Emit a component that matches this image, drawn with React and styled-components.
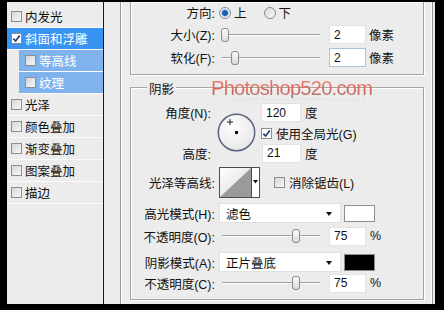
import styled, { createGlobalStyle } from "styled-components"

const GlobalStyle = createGlobalStyle`
  body {
    margin: 0;
    background: #000;
  }
`

const Window = styled.div`
  position: relative;
  width: 444px;
  height: 310px;
  box-sizing: border-box;
  padding: 2px 9px 6px 7px;
  background: #000;
  display: flex;
  font-family: "Liberation Sans", "Noto Sans CJK SC", sans-serif;
  font-size: 12.5px;
  color: #111;
  overflow: hidden;
`

const StyleList = styled.ul`
  list-style: none;
  margin: 0;
  padding: 4px 0 0;
  width: 96px;
  background: #ececec;
  border-right: 1px solid #1a1a1a;
`

const StyleItem = styled.li`
  display: flex;
  align-items: center;
  gap: 3px;
  height: 22px;
  box-sizing: border-box;
  border-bottom: 1px solid #fbfbfb;
  padding-left: ${(p) => (p.$sub ? 6 : 4)}px;
  margin-left: ${(p) => (p.$sub ? 12 : 0)}px;
  background: ${(p) => (p.$active ? "#3993f3" : p.$sub ? "#80b3ec" : "transparent")};
  color: ${(p) => (p.$active || p.$sub ? "#fff" : "#111")};
  white-space: nowrap;
`

const Box = styled.span`
  display: inline-flex;
  align-items: center;
  justify-content: center;
  flex: none;
  width: 11px;
  height: 11px;
  box-sizing: border-box;
  border: 1px solid #8c8d8d;
  background: ${(p) => (p.$checked ? "#fff" : "linear-gradient(135deg, #d6d6d6, #f8f8f8)")};
`

const Options = styled.div`
  flex: 1;
  background: #ececec;
  padding: 0 2px 0 16px;
  display: flex;
`

const Frame = styled.div`
  flex: 1;
  border-left: 1px solid #9a9a9a;
  border-right: 1px solid #9a9a9a;
  box-shadow: inset 1px 0 0 #fff, inset -1px 0 0 #fff;
  padding: 0 8px 0 9px;
  display: flex;
  flex-direction: column;
`

const Group = styled.div`
  position: relative;
  border: 1px solid #a4a4a4;
  border-top: ${(p) => (p.$cut ? "none" : "1px solid #a4a4a4")};
  box-shadow: inset 1px 1px 0 #fff, 1px 1px 0 #fff;
  margin-top: ${(p) => p.$mt || 0}px;
  padding: ${(p) => p.$pt || 0}px 0 ${(p) => p.$pb || 0}px;
`

const Legend = styled.span`
  position: absolute;
  top: -9px;
  left: 16px;
  padding: 0 2px;
  background: #ececec;
`

const Row = styled.div`
  display: grid;
  grid-template-columns: 84px auto;
  column-gap: 4px;
  align-items: center;
  height: ${(p) => p.$h || 23}px;
  margin-top: ${(p) => p.$mt || 0}px;
`

const Label = styled.span`
  text-align: right;
  white-space: nowrap;
`

const Controls = styled.div`
  display: flex;
  align-items: center;
  white-space: nowrap;
`

const Radio = styled.span`
  width: 12px;
  height: 12px;
  box-sizing: border-box;
  border-radius: 50%;
  border: 1px solid #8a8a8a;
  margin-right: 3px;
  margin-left: ${(p) => p.$ml || 0}px;
  background: ${(p) =>
    p.$on
      ? "radial-gradient(circle, #1b5da8 0 2.5px, #6aa0d6 3px, #e8eef6 4px)"
      : "linear-gradient(135deg, #d8d8d8, #fafafa)"};
`

const Slider = styled.div`
  position: relative;
  width: 103px;
  height: 16px;
  margin-right: 7px;
  &::before {
    content: "";
    position: absolute;
    left: 3px;
    right: 2px;
    top: 7px;
    height: 1px;
    background: #a0a0a0;
    box-shadow: 0 1px 0 #fff;
  }
`

const Thumb = styled.span`
  position: absolute;
  top: 1px;
  left: ${(p) => p.$pos}px;
  width: 8px;
  height: 14px;
  box-sizing: border-box;
  border: 1px solid #8b8b8b;
  border-radius: 3px;
  background: linear-gradient(#fdfdfd, #d9d9d9);
`

const NumBox = styled.span`
  display: inline-flex;
  align-items: center;
  width: ${(p) => p.$w || 37}px;
  height: 19px;
  box-sizing: border-box;
  padding-left: 4px;
  margin-left: ${(p) => p.$ml || 0}px;
  background: #fff;
  border: 1px solid ${(p) => (p.$focus ? "#a9c2dc" : "#e2e2e2")};
  font-size: 12px;
`

const Unit = styled.span`
  margin-left: ${(p) => p.$ml || 3}px;
`

const AngleBlock = styled.div`
  display: grid;
  grid-template-columns: 80px 50px auto;
  grid-template-rows: 21px 20px 20px;
  align-items: center;
`

const Dial = styled.svg`
  grid-column: 2;
  grid-row: 1 / 4;
  justify-self: center;
`

const Cell = styled.div`
  display: flex;
  align-items: center;
  white-space: nowrap;
  grid-column: ${(p) => p.$col};
  grid-row: ${(p) => p.$row};
  justify-content: ${(p) => (p.$right ? "flex-end" : "flex-start")};
`

const ContourPicker = styled.div`
  display: flex;
  width: 41px;
  height: 31px;
  box-sizing: border-box;
  border: 1px solid #4d4d4d;
  background: #fff;
  margin-right: 14px;
`

const ContourArrow = styled.div`
  flex: 1;
  display: flex;
  align-items: center;
  justify-content: center;
  border-left: 1px solid #4d4d4d;
`

const Select = styled.div`
  position: relative;
  width: 122px;
  height: 20px;
  box-sizing: border-box;
  display: flex;
  align-items: center;
  padding-left: 6px;
  background: #fff;
  border: 1px solid #e0e0e0;
  &::after {
    content: "";
    position: absolute;
    right: 8px;
    top: 8px;
    border-left: 3px solid transparent;
    border-right: 3px solid transparent;
    border-top: 4px solid #111;
  }
`

const Swatch = styled.span`
  width: 31px;
  height: 17px;
  box-sizing: border-box;
  margin-left: 3px;
  border: 1px solid #8e8e8e;
  background: ${(p) => p.$color};
`

const Watermark = styled.div`
  position: absolute;
  left: 211px;
  top: 78px;
  font-family: "Liberation Sans", sans-serif;
  font-size: 20px;
  line-height: 20px;
  letter-spacing: -0.7px;
  background: linear-gradient(#f08a7a 0%, #dd6456 55%, #a07e7e 100%);
  -webkit-background-clip: text;
  background-clip: text;
  color: transparent;
  -webkit-box-reflect: below -3px linear-gradient(transparent 65%, rgba(255, 255, 255, 0.2));
  pointer-events: none;
`

function Check() {
  return (
    <svg width="9" height="9" viewBox="0 0 9 9">
      <path d="M1.3 4.6 L3.6 7 L7.8 1.6" fill="none" stroke="#23407a" strokeWidth="1.7" />
    </svg>
  )
}

function Checkbox({ checked }) {
  return <Box $checked={checked}>{checked && <Check />}</Box>
}

const layers = [
  { name: "内发光" },
  { name: "斜面和浮雕", active: true, checked: true },
  { name: "等高线", sub: true },
  { name: "纹理", sub: true },
  { name: "光泽" },
  { name: "颜色叠加" },
  { name: "渐变叠加" },
  { name: "图案叠加" },
  { name: "描边" },
]

function App() {
  return (
    <>
      <GlobalStyle />
      <Window>
        <StyleList>
          {layers.map((l) => (
            <StyleItem key={l.name} $active={l.active} $sub={l.sub}>
              <Checkbox checked={l.checked} />
              {l.name}
            </StyleItem>
          ))}
        </StyleList>

        <Options>
          <Frame>
            <Group $cut $pb={5}>
              <Row $h={21}>
                <Label>方向:</Label>
                <Controls>
                  <Radio $on />上
                  <Radio $ml={17} />下
                </Controls>
              </Row>
              <Row>
                <Label>大小(Z):</Label>
                <Controls>
                  <Slider><Thumb $pos={2} /></Slider>
                  <NumBox>2</NumBox>
                  <Unit>像素</Unit>
                </Controls>
              </Row>
              <Row>
                <Label>软化(F):</Label>
                <Controls>
                  <Slider><Thumb $pos={12} /></Slider>
                  <NumBox $focus>2</NumBox>
                  <Unit>像素</Unit>
                </Controls>
              </Row>
            </Group>

            <Group $mt={12} $pt={14} $pb={6}>
              <Legend>阴影</Legend>
              <AngleBlock>
                <Cell $col={1} $row={1} $right>角度(N):</Cell>
                <Dial width="39" height="39" viewBox="0 0 39 39">
                  <defs>
                    <radialGradient id="dialFill" cx="0.4" cy="0.35" r="0.7">
                      <stop offset="0" stopColor="#ffffff" />
                      <stop offset="1" stopColor="#e6e6e6" />
                    </radialGradient>
                  </defs>
                  <circle cx="19.5" cy="19.5" r="18.2" fill="url(#dialFill)" stroke="#5b6680" strokeWidth="1.5" />
                  <path d="M13 6 V12 M10 9 H16" stroke="#222" strokeWidth="1" />
                  <rect x="18" y="18" width="3" height="3" fill="#111" />
                </Dial>
                <Cell $col={3} $row={1}>
                  <NumBox $w={40}>120</NumBox>
                  <Unit $ml={4}>度</Unit>
                </Cell>
                <Cell $col={3} $row={2}>
                  <Checkbox checked />
                  <Unit $ml={4}>使用全局光(G)</Unit>
                </Cell>
                <Cell $col={1} $row={3} $right>高度:</Cell>
                <Cell $col={3} $row={3}>
                  <NumBox $w={39} $ml={1}>21</NumBox>
                  <Unit $ml={4}>度</Unit>
                </Cell>
              </AngleBlock>

              <Row $h={32} $mt={3}>
                <Label>光泽等高线:</Label>
                <Controls>
                  <ContourPicker>
                    <svg width="31" height="29" viewBox="0 0 31 29">
                      <defs>
                        <linearGradient id="contourFill" x1="0" y1="0" x2="1" y2="1">
                          <stop offset="0" stopColor="#ffffff" />
                          <stop offset="1" stopColor="#d8d8d8" />
                        </linearGradient>
                      </defs>
                      <rect width="31" height="29" fill="url(#contourFill)" />
                      <polygon points="0,29 31,0 31,29" fill="#9a9a9a" />
                    </svg>
                    <ContourArrow>
                      <svg width="5" height="4" viewBox="0 0 5 4">
                        <polygon points="0,0 5,0 2.5,3.5" fill="#111" />
                      </svg>
                    </ContourArrow>
                  </ContourPicker>
                  <Checkbox />
                  <Unit $ml={4}>消除锯齿(L)</Unit>
                </Controls>
              </Row>

              <Row $h={20} $mt={5}>
                <Label>高光模式(H):</Label>
                <Controls>
                  <Select>滤色</Select>
                  <Swatch $color="#fff" />
                </Controls>
              </Row>
              <Row $h={20} $mt={3}>
                <Label>不透明度(O):</Label>
                <Controls>
                  <Slider><Thumb $pos={73} /></Slider>
                  <NumBox>75</NumBox>
                  <Unit $ml={4}>%</Unit>
                </Controls>
              </Row>
              <Row $h={20} $mt={6}>
                <Label>阴影模式(A):</Label>
                <Controls>
                  <Select>正片叠底</Select>
                  <Swatch $color="#000" />
                </Controls>
              </Row>
              <Row $h={20} $mt={1}>
                <Label>不透明度(C):</Label>
                <Controls>
                  <Slider><Thumb $pos={73} /></Slider>
                  <NumBox>75</NumBox>
                  <Unit $ml={4}>%</Unit>
                </Controls>
              </Row>
            </Group>
          </Frame>
        </Options>

        <Watermark>Photoshop520.com</Watermark>
      </Window>
    </>
  )
}

export default App
